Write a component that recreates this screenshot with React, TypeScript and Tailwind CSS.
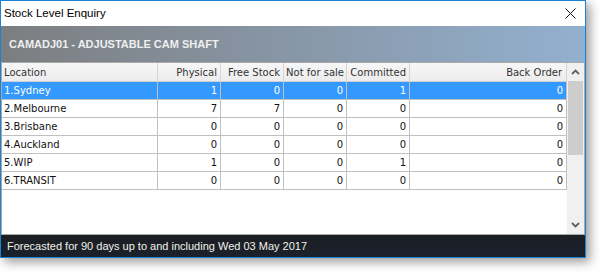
import React from "react";

const rows = [
  { loc: "1.Sydney", v: [1, 0, 0, 1, 0], sel: true },
  { loc: "2.Melbourne", v: [7, 7, 0, 0, 0] },
  { loc: "3.Brisbane", v: [0, 0, 0, 0, 0] },
  { loc: "4.Auckland", v: [0, 0, 0, 0, 0] },
  { loc: "5.WIP", v: [1, 0, 0, 1, 0] },
  { loc: "6.TRANSIT", v: [0, 0, 0, 0, 0] },
];

const numW = ["w-[63px]", "w-[63px]", "w-[63px]", "w-[63px]", "w-[157px]"];

export default function App() {
  return (
    <div className="w-[601px] h-[273px] bg-white relative overflow-hidden">
      <div className="w-[586px] h-[258px] border border-[#1883d7] bg-white flex flex-col shadow-[4px_4px_10px_rgba(0,0,0,0.4)]">
        {/* Title bar */}
        <div className="h-[25px] flex items-center justify-between pl-[3px] pr-[9px] bg-white">
          <span className="text-[11.5px] text-black" style={{ fontFamily: '"Liberation Sans", Arial, sans-serif' }}>
            Stock Level Enquiry
          </span>
          <svg width="11" height="11" viewBox="0 0 11 11" className="mb-[1px]">
            <path d="M0.5 0.5 L10.5 10.5 M10.5 0.5 L0.5 10.5" stroke="#111" strokeWidth="1" fill="none" />
          </svg>
        </div>
        {/* Gradient header */}
        <div className="h-[36px] flex items-center pl-[8px] bg-gradient-to-r from-[#7c7e80] to-[#93b0cf]">
          <span className="text-[11px] font-bold text-[#efefef]" style={{ fontFamily: '"Liberation Sans", Arial, sans-serif' }}>
            CAMADJ01 - ADJUSTABLE CAM SHAFT
          </span>
        </div>
        {/* Grid */}
        <div className="h-[173px] border border-[#a8a8a8] flex bg-white" style={{ fontFamily: '"DejaVu Sans", Tahoma, sans-serif' }}>
          <div className="flex-1 flex flex-col text-[10px]">
            {/* header row */}
            <div className="h-[19px] flex bg-gradient-to-b from-[#f7f7f7] to-[#ececec] border-b border-[#d0d0d0] text-[#333]">
              <div className="w-[156px] border-r border-[#d5d5d5] pl-[2px] flex items-center">Location</div>
              <div className="w-[63px] border-r border-[#d5d5d5] pr-[3px] flex items-center justify-end">Physical</div>
              <div className="w-[63px] border-r border-[#d5d5d5] pr-[3px] flex items-center justify-end">Free Stock</div>
              <div className="w-[63px] border-r border-[#d5d5d5] pr-[2px] flex items-center justify-end overflow-hidden whitespace-nowrap">Not for sale</div>
              <div className="w-[63px] border-r border-[#d5d5d5] pr-[3px] flex items-center justify-end">Committed</div>
              <div className="w-[157px] border-r border-[#d5d5d5] pr-[4px] flex items-center justify-end">Back Order</div>
            </div>
            {rows.map((r) => (
              <div
                key={r.loc}
                className={`h-[18px] flex border-b border-[#c0c0c0] ${r.sel ? "bg-[#3399ff] text-white" : "bg-white text-[#111]"}`}
              >
                <div className="w-[156px] border-r border-[#c0c0c0] pl-[2px] flex items-center">{r.loc}</div>
                {r.v.map((n, i) => (
                  <div key={i} className={`${numW[i]} border-r border-[#c0c0c0] pr-[3px] flex items-center justify-end`}>
                    {n}
                  </div>
                ))}
              </div>
            ))}
          </div>
          {/* Scrollbar */}
          <div className="w-[17px] bg-[#f0f0f0] flex flex-col">
            <div className="h-[18px] flex items-center justify-center">
              <svg width="9" height="6" viewBox="0 0 9 6">
                <path d="M1 5 L4.5 1.5 L8 5" stroke="#606060" strokeWidth="1.8" fill="none" />
              </svg>
            </div>
            <div className="h-[74px] mx-[1px] bg-[#cdcdcd]" />
            <div className="flex-1" />
            <div className="h-[18px] flex items-center justify-center">
              <svg width="9" height="6" viewBox="0 0 9 6">
                <path d="M1 1 L4.5 4.5 L8 1" stroke="#606060" strokeWidth="1.8" fill="none" />
              </svg>
            </div>
          </div>
        </div>
        {/* Status bar */}
        <div className="flex-1 bg-gradient-to-b from-[#1c1e22] to-[#1a212c] flex items-center pl-[6px]">
          <span className="text-[11px] text-[#f2f2e8]" style={{ fontFamily: '"Liberation Sans", Arial, sans-serif' }}>
            Forecasted for 90 days up to and including Wed 03 May 2017
          </span>
        </div>
      </div>
    </div>
  );
}
